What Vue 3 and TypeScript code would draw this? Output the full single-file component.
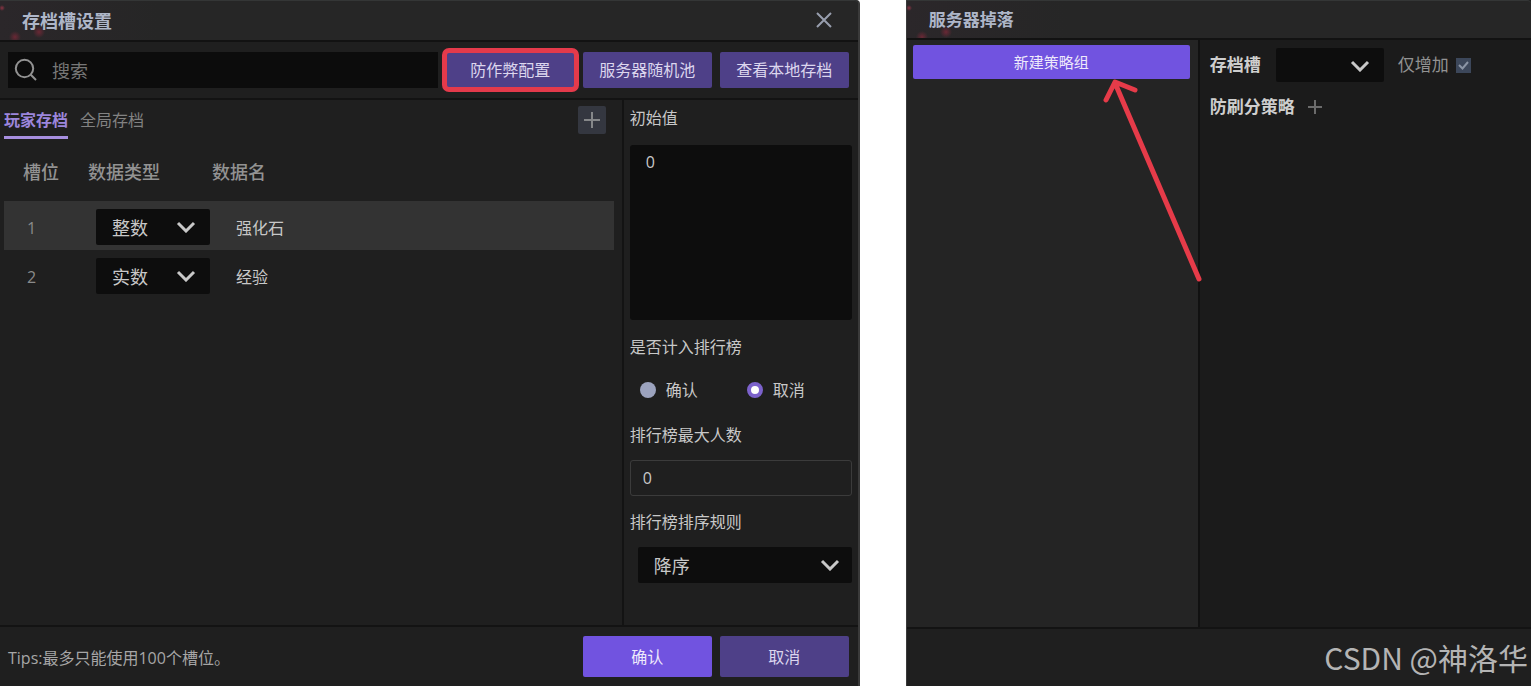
<script setup lang="ts">
import { ref } from 'vue'

interface Slot {
  id: number
  type: string
  name: string
}

const slots = ref<Slot[]>([
  { id: 1, type: '整数', name: '强化石' },
  { id: 2, type: '实数', name: '经验' },
])
const types = ['整数', '实数']
const selected = ref(1)
const tab = ref('player')
const search = ref('')
const initial = ref('0')
const ranked = ref('no')
const maxCount = ref('0')
const order = ref('降序')
const dropSlot = ref('')
const onlyIncrease = ref(true)
</script>

<template>
  <main class="stage">
    <section class="dialog archive" aria-labelledby="archive-title">
      <header class="head">
        <h1 id="archive-title">存档槽设置</h1>
        <button class="icon-btn" type="button" aria-label="关闭">
          <svg width="18" height="18" viewBox="0 0 18 18"><path d="M2 1 16 15M16 1 2 15" /></svg>
        </button>
      </header>

      <div class="toolbar">
        <label class="search">
          <svg width="24" height="24" viewBox="0 0 24 24"><circle cx="10.5" cy="10.5" r="8.7" /><path d="M16.8 16.8 22 22" /></svg>
          <input v-model="search" type="text" placeholder="搜索" aria-label="搜索" />
        </label>
        <button class="btn marked" type="button">防作弊配置</button>
        <button class="btn" type="button">服务器随机池</button>
        <button class="btn" type="button">查看本地存档</button>
      </div>

      <div class="body">
        <div class="list">
          <nav class="tabs">
            <button type="button" :class="{ active: tab === 'player' }" @click="tab = 'player'">玩家存档</button>
            <button type="button" :class="{ active: tab === 'global' }" @click="tab = 'global'">全局存档</button>
            <button class="add" type="button" aria-label="添加">
              <svg width="16" height="16" viewBox="0 0 16 16"><path d="M8 0V16M0 8H16" /></svg>
            </button>
          </nav>
          <table>
            <thead>
              <tr>
                <th class="c-slot">槽位</th>
                <th class="c-type">数据类型</th>
                <th>数据名</th>
              </tr>
            </thead>
            <tbody>
              <tr v-for="s in slots" :key="s.id" :class="{ on: s.id === selected }" @click="selected = s.id">
                <td class="num">{{ s.id }}</td>
                <td>
                  <span class="select type-select">
                    <select v-model="s.type" aria-label="数据类型">
                      <option v-for="t in types" :key="t">{{ t }}</option>
                    </select>
                    <svg width="20" height="12" viewBox="0 0 20 12"><path d="M2 2 10 10 18 2" /></svg>
                  </span>
                </td>
                <td class="name">{{ s.name }}</td>
              </tr>
            </tbody>
          </table>
        </div>

        <form class="side" @submit.prevent>
          <label class="field" for="initial">初始值</label>
          <textarea id="initial" v-model="initial"></textarea>
          <fieldset>
            <legend class="field">是否计入排行榜</legend>
            <div class="radios">
              <label><input v-model="ranked" type="radio" name="ranked" value="yes" />确认</label>
              <label><input v-model="ranked" type="radio" name="ranked" value="no" />取消</label>
            </div>
          </fieldset>
          <label class="field" for="max">排行榜最大人数</label>
          <input id="max" v-model="maxCount" class="text" type="text" />
          <label class="field" for="order">排行榜排序规则</label>
          <span class="select order-select">
            <select id="order" v-model="order">
              <option>降序</option>
              <option>升序</option>
            </select>
            <svg width="20" height="12" viewBox="0 0 20 12"><path d="M2 2 10 10 18 2" /></svg>
          </span>
        </form>
      </div>

      <footer class="foot">
        <p>Tips:最多只能使用100个槽位。</p>
        <button class="btn primary" type="button">确认</button>
        <button class="btn" type="button">取消</button>
      </footer>
    </section>

    <section class="dialog drop" aria-labelledby="drop-title">
      <header class="head">
        <h1 id="drop-title">服务器掉落</h1>
      </header>
      <div class="body">
        <aside class="groups">
          <button class="btn primary" type="button">新建策略组</button>
          <svg class="arrow" width="104" height="210" viewBox="0 0 104 210">
            <path d="M99 203 15 7M6 24 15 6 35 14" />
          </svg>
        </aside>
        <div class="rules">
          <div class="row">
            <label class="strong" for="drop-slot">存档槽</label>
            <span class="select slot-select">
              <select id="drop-slot" v-model="dropSlot">
                <option value=""></option>
                <option v-for="s in slots" :key="s.id" :value="s.name">{{ s.name }}</option>
              </select>
              <svg width="20" height="12" viewBox="0 0 20 12"><path d="M2 2 10 10 18 2" /></svg>
            </span>
            <label class="check">
              仅增加
              <span class="box">
                <input v-model="onlyIncrease" type="checkbox" />
                <svg v-if="onlyIncrease" width="15" height="15" viewBox="0 0 15 15"><path d="M3 7 6.5 10.5 12 4" /></svg>
              </span>
            </label>
          </div>
          <div class="row second">
            <span class="strong">防刷分策略</span>
            <button class="plain" type="button" aria-label="添加策略">
              <svg width="16" height="16" viewBox="0 0 16 16"><path d="M8 1V15M1 8H15" /></svg>
            </button>
          </div>
        </div>
      </div>
      <footer class="foot"></footer>
      <span class="watermark">CSDN @神洛华</span>
    </section>
  </main>
</template>

<style>
body {
  margin: 0;
  background: #fff;
}
</style>

<style scoped>
* {
  box-sizing: border-box;
}
.stage {
  display: flex;
  gap: 46px;
  min-height: 100vh;
  font: 16px/24px "Open Sans", "Noto Sans CJK SC", sans-serif;
  color: #c8c8c8;
}
button,
input,
select,
textarea {
  margin: 0;
  font: inherit;
  color: inherit;
}
button {
  padding: 0;
  border: 0;
  background: none;
}
svg {
  display: block;
  fill: none;
  stroke: currentColor;
  stroke-width: 2;
}
.dialog {
  position: relative;
  display: flex;
  flex-direction: column;
  min-width: 0;
  background: #1f1f1f;
}
.archive {
  flex: 860 1 0;
  border-right: 2px solid #3a3a3a;
  border-top-right-radius: 4px;
}
.drop {
  flex: 626 1 0;
  border-left: 1px solid #3a3a3a;
}
.head {
  display: flex;
  align-items: center;
  justify-content: space-between;
  height: 42px;
  padding: 0 25px 0 22px;
  border-top: 1px solid #343636;
  border-bottom: 2px solid #121212;
  border-top-right-radius: 4px;
  background:
    radial-gradient(circle at 2px 7px, #8a3343 0, transparent 3px),
    radial-gradient(circle at 15px 36px, #6a2835 0, transparent 6px),
    radial-gradient(circle at 39px 31px, #6a2835 0, transparent 6px),
    linear-gradient(90deg, #2b272a, #262626 160px);
}
.head h1 {
  margin: 0;
  font-size: 18px;
  font-weight: 700;
  color: #aeb6c8;
}
.icon-btn {
  color: #989eae;
}
.toolbar {
  display: flex;
  gap: 8px;
  padding: 10px 9px 10px 8px;
  border-bottom: 2px solid #131313;
}
.search {
  flex: 1;
  display: flex;
  align-items: center;
  gap: 14px;
  min-width: 0;
  height: 36px;
  padding-left: 6px;
  background: #0c0c0c;
  color: #929292;
}
.search svg {
  flex: none;
}
.search input {
  flex: 1;
  min-width: 0;
  padding: 2px 0 0;
  border: 0;
  outline: 0;
  background: none;
  font-size: 18px;
}
.search input::placeholder {
  color: #777;
  opacity: 1;
}
.btn {
  position: relative;
  width: 129px;
  height: 36px;
  border-radius: 2px;
  background: #4e4088;
  color: #dcd6ee;
}
.primary {
  background: #7153e0;
  color: #eee9fb;
}
.marked::after {
  content: "";
  position: absolute;
  inset: -4px;
  border: 5px solid #e43a4b;
  border-radius: 7px;
}
.body {
  flex: 1;
  display: flex;
}
.list {
  flex: 1;
  min-width: 0;
  padding: 0 8px 0 4px;
}
.tabs {
  display: flex;
  gap: 12px;
  height: 39px;
}
.tabs button {
  padding-top: 3px;
  border-bottom: 3px solid transparent;
  color: #828282;
}
.tabs .active {
  border-bottom-color: #a78fdf;
  color: #9c86dc;
  font-weight: 700;
}
.tabs .add {
  display: grid;
  place-items: center;
  width: 28px;
  height: 28px;
  margin: 6px 8px 0 auto;
  padding: 0;
  border: 0;
  border-radius: 2px;
  background: #343740;
  color: #858789;
}
table {
  width: 100%;
  border-collapse: collapse;
  table-layout: fixed;
}
th {
  height: 62px;
  padding: 4px 0 0;
  text-align: left;
  font-size: 18px;
  font-weight: 500;
  color: #929292;
}
.c-slot {
  width: 84px;
  padding-left: 19px;
}
.c-type {
  width: 124px;
}
td {
  height: 49px;
  padding: 3px 0 0;
}
.on {
  background: #333;
}
.num {
  padding: 5px 0 0 23px;
  color: #8a8a8a;
}
.name {
  padding: 5px 0 0 24px;
}
.select {
  position: relative;
  display: block;
}
.select select {
  display: block;
  width: 100%;
  height: 36px;
  padding: 2px 40px 0 16px;
  border: 0;
  border-radius: 2px;
  outline: 0;
  appearance: none;
  background: #0d0d0d;
  font-size: 18px;
}
.select svg {
  position: absolute;
  top: 12px;
  right: 14px;
  pointer-events: none;
  stroke-width: 3;
}
.type-select {
  width: 114px;
  margin-left: 8px;
}
.side {
  display: flex;
  flex-direction: column;
  width: 236px;
  padding: 6px 6px 42px;
  border-left: 2px solid #131313;
}
textarea,
.text {
  width: 100%;
  border: 0;
  border-radius: 3px;
  outline: 0;
}
textarea {
  height: 175px;
  margin: 15px 0;
  padding: 5px 16px;
  resize: none;
  background: #0d0d0d;
}
fieldset {
  margin: 0 0 21px;
  padding: 0;
  border: 0;
}
legend {
  padding: 0;
}
.radios {
  display: flex;
  gap: 49px;
  margin-top: 19px;
  padding-left: 10px;
}
.radios label {
  display: flex;
  align-items: center;
  gap: 10px;
}
.radios input {
  width: 16px;
  height: 16px;
  border-radius: 50%;
  appearance: none;
  background: #9ca3be;
}
.radios input:checked {
  border: 4px solid #7c62cc;
  background: #fff;
}
.text {
  height: 36px;
  margin: 13px 0 14px;
  padding: 0 12px;
  border: 1px solid #3b3b3b;
  background: transparent;
}
.order-select {
  margin: 13px 0 0 8px;
}
.order-select svg {
  right: 12px;
}
.foot {
  display: flex;
  align-items: center;
  gap: 8px;
  height: 61px;
  padding: 0 9px 0 8px;
  border-top: 2px solid #131313;
}
.foot p {
  flex: 1;
  margin: 0;
  padding-top: 2px;
  color: #a6a6a6;
}
.foot .btn {
  height: 41px;
}
.drop .head {
  height: 40px;
}
.drop .head h1 {
  font-size: 17px;
}
.drop .foot {
  height: 59px;
}
.groups {
  position: relative;
  width: 293px;
  padding: 5px 8px 0 6px;
  border-right: 2px solid #111;
  background: #242424;
}
.groups .btn {
  width: 100%;
  height: 34px;
  font-size: 15px;
}
.arrow {
  position: absolute;
  top: 36px;
  right: -6px;
  color: #e63b49;
  pointer-events: none;
}
.arrow path {
  stroke-width: 5;
  stroke-linecap: round;
  stroke-linejoin: round;
}
.rules {
  flex: 1;
  min-width: 0;
  padding: 8px 10px;
  background: #1b1b1b;
  font-size: 17px;
}
.row {
  display: flex;
  align-items: center;
}
.strong {
  font-weight: 700;
  color: #cecece;
}
.slot-select {
  width: 108px;
  margin: 0 14px 0 15px;
}
.slot-select select {
  height: 34px;
}
.check {
  display: flex;
  align-items: center;
  gap: 7px;
  color: #929292;
}
.box {
  display: grid;
}
.box > * {
  grid-area: 1 / 1;
}
.box input {
  width: 15px;
  height: 15px;
  appearance: none;
  background: #3c475a;
}
.box svg {
  color: #8b95a5;
  pointer-events: none;
}
.second {
  gap: 12px;
  margin-top: 13px;
}
.plain {
  color: #6b6b6b;
}
.watermark {
  position: absolute;
  right: 3px;
  bottom: 9px;
  font: 30px/40px "Noto Sans CJK SC", sans-serif;
  color: #b4b4b4;
}
</style>
